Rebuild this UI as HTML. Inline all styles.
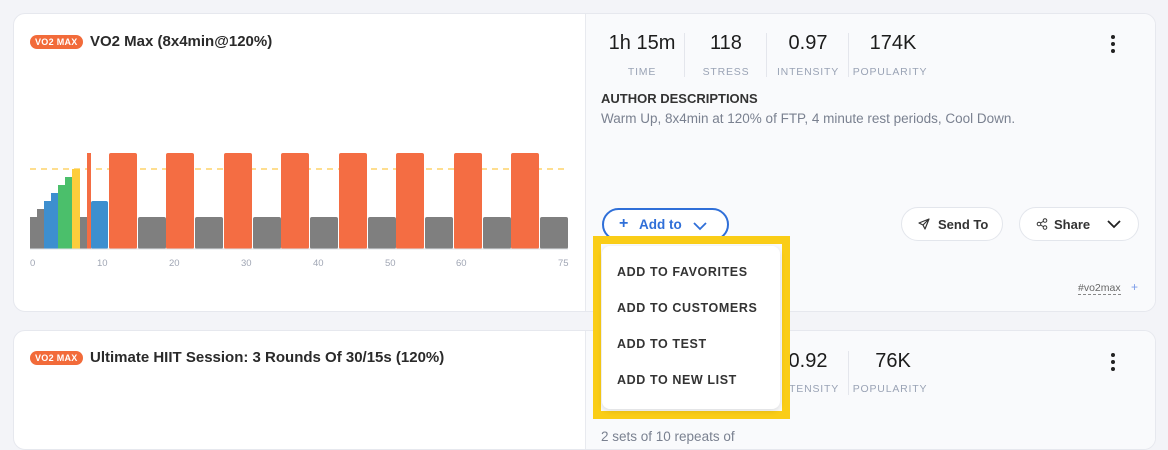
<!DOCTYPE html>
<html><head><meta charset="utf-8"><style>
*{box-sizing:border-box;margin:0;padding:0}
body{width:1168px;height:433px;background:#f3f4f8;font-family:"Liberation Sans",sans-serif;position:relative;overflow:hidden;color:#222}
.a{position:absolute;white-space:nowrap}
.card{position:absolute;left:13px;width:1143px;background:#fff;border:1px solid #e6e8ee;border-radius:12px;overflow:hidden}
.rp{position:absolute;left:571px;top:0;right:0;bottom:0;background:#f9fafc;border-left:1px solid #e8eaef}
.badge{background:#f26b3a;color:#fff;font-size:9px;font-weight:bold;border-radius:7px;padding:2px 5px;letter-spacing:.3px}
.title{font-size:15px;font-weight:bold;color:#2a2a2a}
.sv{font-size:20px;font-weight:500;color:#1c1c1c;text-align:center;width:84px}
.sl{font-size:10.5px;color:#9aa3b5;letter-spacing:.8px;text-align:center;width:84px}
.dv{width:1px;height:44px;background:#e4e6ec}
.btn{border:1px solid #e3e6ec;background:#fff;border-radius:17px;height:34px;font-size:13px;font-weight:bold;color:#333;display:flex;align-items:center}
.mi{font-size:12.5px;font-weight:bold;color:#333;letter-spacing:.6px}
</style></head><body>

<div class="card" style="top:13px;height:299px">
 <div class="rp"></div>
</div>
<div class="card" style="top:330px;height:120px">
 <div class="rp"></div>
</div>

<span class="a badge" style="left:30px;top:35px">VO2 MAX</span>
<span class="a title" style="left:90px;top:33px">VO2 Max (8x4min@120%)</span>

<svg class="a" style="left:0;top:0" width="590" height="280">
 <line x1="30" y1="169" x2="568" y2="169" stroke="#fdd46a" stroke-width="1.5" stroke-dasharray="6,5"/>
 <rect x="30" y="217" width="7" height="32" fill="#7f7f7f"/>
 <rect x="37" y="209" width="7" height="40" fill="#7f7f7f"/>
 <rect x="44" y="201" width="7" height="48" fill="#3d8fcf"/>
 <rect x="51" y="193" width="7" height="56" fill="#3d8fcf"/>
 <rect x="58" y="185" width="7" height="64" fill="#4bbf6b"/>
 <rect x="65" y="177" width="7" height="72" fill="#4bbf6b"/>
 <rect x="72" y="169" width="8" height="80" fill="#fdcd3c"/>
 <rect x="80" y="217" width="7" height="32" fill="#7f7f7f"/>
 <rect x="87" y="153" width="4" height="96" fill="#f46d43"/>
 <rect x="91" y="201" width="17" height="48" rx="2" fill="#3d8fcf"/>
 <g fill="#f46d43">
  <rect x="109" y="153" width="28" height="96" rx="2"/><rect x="166" y="153" width="28" height="96" rx="2"/>
  <rect x="224" y="153" width="28" height="96" rx="2"/><rect x="281" y="153" width="28" height="96" rx="2"/>
  <rect x="339" y="153" width="28" height="96" rx="2"/><rect x="396" y="153" width="28" height="96" rx="2"/>
  <rect x="454" y="153" width="28" height="96" rx="2"/><rect x="511" y="153" width="28" height="96" rx="2"/>
 </g>
 <g fill="#7f7f7f">
  <rect x="138" y="217" width="28" height="32" rx="2"/><rect x="195" y="217" width="28" height="32" rx="2"/>
  <rect x="253" y="217" width="28" height="32" rx="2"/><rect x="310" y="217" width="28" height="32" rx="2"/>
  <rect x="368" y="217" width="28" height="32" rx="2"/><rect x="425" y="217" width="28" height="32" rx="2"/>
  <rect x="483" y="217" width="28" height="32" rx="2"/><rect x="540" y="217" width="28" height="32" rx="2"/>
 </g>
 <line x1="30" y1="249" x2="568" y2="249" stroke="#dde0e6"/>
 <g font-size="9.5" fill="#a0a6b4" font-family="Liberation Sans">
  <text x="30" y="266">0</text><text x="97" y="266">10</text><text x="169" y="266">20</text><text x="241" y="266">30</text>
  <text x="313" y="266">40</text><text x="385" y="266">50</text><text x="456" y="266">60</text><text x="558" y="266">75</text>
 </g>
</svg>

<div class="a sv" style="left:600px;top:32px">1h 15m</div>
<div class="a sv" style="left:684px;top:32px">118</div>
<div class="a sv" style="left:766px;top:32px">0.97</div>
<div class="a sv" style="left:851px;top:32px">174K</div>
<div class="a sl" style="left:600px;top:66px">TIME</div>
<div class="a sl" style="left:684px;top:66px">STRESS</div>
<div class="a sl" style="left:766px;top:66px">INTENSITY</div>
<div class="a sl" style="left:848px;top:66px">POPULARITY</div>
<div class="a dv" style="left:684px;top:33px"></div>
<div class="a dv" style="left:766px;top:33px"></div>
<div class="a dv" style="left:848px;top:33px"></div>
<svg class="a" style="left:1108px;top:34px" width="10" height="20"><circle cx="5" cy="3" r="2" fill="#222"/><circle cx="5" cy="10" r="2" fill="#222"/><circle cx="5" cy="17" r="2" fill="#222"/></svg>

<div class="a" style="left:601px;top:91px;font-size:13px;font-weight:bold;color:#333">AUTHOR DESCRIPTIONS</div>
<div class="a" style="left:601px;top:111px;font-size:13.5px;color:#7a8190">Warm Up, 8x4min at 120% of FTP, 4 minute rest periods, Cool Down.</div>

<div class="a" style="left:602px;top:208px;width:127px;height:33px;border:2px solid #2f6fd8;border-radius:17px;background:#fff;color:#2f6fd8;font-size:13.5px;font-weight:bold">
 <span class="a" style="left:15px;top:5px;font-size:16px">+</span>
 <span class="a" style="left:35px;top:7px">Add to</span>
 <svg class="a" style="left:88px;top:11px" width="16" height="10"><path d="M2 2 L8 8 L14 2" stroke="#2f6fd8" stroke-width="1.8" fill="none"/></svg>
</div>
<div class="a btn" style="left:901px;top:207px;width:102px">
 <svg style="margin-left:16px" width="12" height="12"><path d="M11 1 L1 5 L5 7 L7 11 Z M5 7 L11 1" stroke="#333" stroke-width="1.2" fill="none" stroke-linejoin="round"/></svg>
 <span style="margin-left:8px">Send To</span>
</div>
<div class="a btn" style="left:1019px;top:207px;width:120px">
 <svg style="margin-left:16px" width="12" height="12"><circle cx="3" cy="6" r="1.8" stroke="#333" fill="none"/><circle cx="9" cy="2.5" r="1.8" stroke="#333" fill="none"/><circle cx="9" cy="9.5" r="1.8" stroke="#333" fill="none"/><path d="M4.5 5 L7.5 3.3 M4.5 7 L7.5 8.7" stroke="#333"/></svg>
 <span style="margin-left:6px">Share</span>
 <svg style="margin-left:16px" width="16" height="10"><path d="M2 2 L8 8 L14 2" stroke="#222" stroke-width="1.8" fill="none"/></svg>
</div>

<div class="a" style="left:1078px;top:282px;font-size:10.5px;color:#666;border-bottom:1px dashed #888;line-height:12px">#vo2max</div>
<div class="a" style="left:1131px;top:280px;font-size:12px;color:#7a9be8">+</div>

<span class="a badge" style="left:30px;top:351px">VO2 MAX</span>
<span class="a title" style="left:90px;top:349px">Ultimate HIIT Session: 3 Rounds Of 30/15s (120%)</span>
<div class="a sv" style="left:766px;top:350px">0.92</div>
<div class="a sv" style="left:851px;top:350px">76K</div>
<div class="a sl" style="left:766px;top:383px">INTENSITY</div>
<div class="a sl" style="left:848px;top:383px">POPULARITY</div>
<div class="a dv" style="left:848px;top:351px"></div>
<svg class="a" style="left:1108px;top:352px" width="10" height="20"><circle cx="5" cy="3" r="2" fill="#222"/><circle cx="5" cy="10" r="2" fill="#222"/><circle cx="5" cy="17" r="2" fill="#222"/></svg>
<div class="a" style="left:601px;top:407px;font-size:13px;font-weight:bold;color:#333">AUTHOR DESCRIPTIONS</div>
<div class="a" style="left:601px;top:429px;font-size:13.5px;color:#7a8190">2 sets of 10 repeats of</div>

<div class="a" style="left:593px;top:236px;width:197px;height:183px;border:8px solid #facd17;background:#f9fafc">
 <div class="a" style="left:1px;top:2px;width:178px;height:163px;background:#fff;border-radius:8px;box-shadow:0 2px 6px rgba(0,0,0,.12)">
  <div class="a mi" style="left:15px;top:19px">ADD TO FAVORITES</div>
  <div class="a mi" style="left:15px;top:55px">ADD TO CUSTOMERS</div>
  <div class="a mi" style="left:15px;top:91px">ADD TO TEST</div>
  <div class="a mi" style="left:15px;top:127px">ADD TO NEW LIST</div>
 </div>
</div>
</body></html>
